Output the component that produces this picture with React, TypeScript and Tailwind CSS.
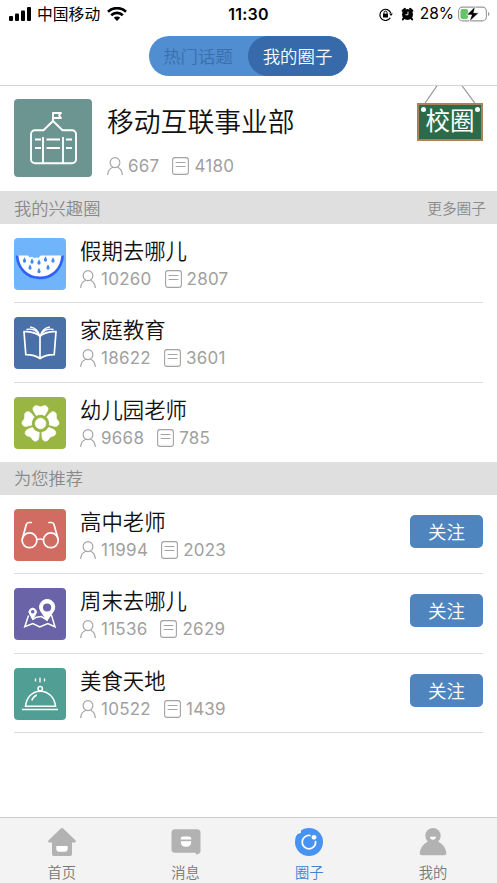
import { useState, type ReactNode } from "react";

type Circle = {
  name: string;
  members: number;
  posts: number;
  color: string;
  icon: ReactNode;
};

function PersonIcon() {
  return (
    <svg width="16" height="18" viewBox="0 0 16 18" fill="none" stroke="#a3a3a3" strokeWidth="1.15">
      <ellipse cx="8" cy="5.6" rx="4.9" ry="5" />
      <path d="M.6 18c.3-4 2.2-6.7 5.4-7.8M10.6 10.2c2.8 1.2 4.5 4 4.8 7.800" />
    </svg>
  );
}

function PostIcon() {
  return (
    <svg width="17" height="18" viewBox="0 0 17 18" fill="none" stroke="#a3a3a3" strokeWidth="1.1">
      <rect x=".6" y=".6" width="15.8" height="16.8" rx="2.5" />
      <path d="M3.6 5.5h9.8M3.6 9.500h9.8" />
    </svg>
  );
}

function Stats({ members, posts }: { members: number; posts: number }) {
  return (
    <div className="flex h-5 items-center font-['Inter','Noto_Sans_CJK_SC',sans-serif] text-[17px] leading-5 tracking-[0.25px] text-[#a0a0a0]">
      <PersonIcon />
      <span className="ml-[5px]">{members}</span>
      <span className="ml-[13px]">
        <PostIcon />
      </span>
      <span className="ml-[5px]">{posts}</span>
    </div>
  );
}

function SchoolIcon() {
  return (
    <svg className="size-full" viewBox="0 0 78 78" fill="none" stroke="#fff" strokeWidth="1.9" strokeLinejoin="round">
      <path d="M39 23v-9h8l-2 2.500 2 2.500h-7M39 22l-9.500 9.200H21a4 4 0 0 0-4 4v25a4 4 0 0 0 4 4h37a4 4 0 0 0 4-4v-25a4 4 0 0 0-4-4h-9.500z" />
      <path d="M29 38v26M49 38v26M21 40.500h6M21 49h6M32.500 40.500H46M32.500 49H46M52 40.500h6M52 49h6" />
    </svg>
  );
}

const watermelon = (
  <svg className="size-full" viewBox="0 0 52 52">
    <path d="M3 17.500h45.500C47.500 32 38 41 26 41S4 32 3 17.500z" fill="#fff" />
    <path d="M3 17.500C4 31.500 14 39.800 26 39.800S47.500 31.500 48.700 17.500" fill="none" stroke="#2f62f5" strokeWidth="2.700" />
    <path d="M2 17h12l1.500 2.500 2.500-.8 2 1.300 3-.6 1.500.500L27 17h23v-2H2z" fill="#70b5fb" />
    <g fill="#4388ed">
      {[
        [10.5, 22.5],
        [18, 23.5],
        [25, 24.5],
        [31.5, 21.5],
        [39, 22.5],
        [16, 29.5],
        [34, 29.5],
        [25, 33],
      ].map(([x, y]) => (
        <path key={`${x}-${y}`} transform={`translate(${x} ${y})`} d="M0-3.200Q1.600-.3 1.600.6a1.600 1.600 0 0 1-3.200 0Q-1.600-.3 0-3.200z" />
      ))}
    </g>
  </svg>
);

const book = (
  <svg className="size-full" viewBox="0 0 52 52" fill="none" stroke="#fff" strokeWidth="1.700" strokeLinejoin="round">
    <path d="M26 19.500c-4-4-8.500-5-16-4.800l1.800 23c6 0 10.200.8 14.200 4 4-3.200 8.200-4 14.200-4l1.800-23c-7.500-.2-12 .8-16 4.800zM26 19.500v22" />
    <path d="M12.500 12.500c6-1.500 10.500.8 13.500 7 3-6.200 7.500-8.500 13.500-7M16 10c4.500.5 8.500 4 10 9.500 1.500-5.500 5.500-9 10-9.500" strokeWidth="1.300" />
  </svg>
);

const flower = (
  <svg className="size-full" viewBox="0 0 52 52" fill="#fff" stroke="#fff" strokeWidth=".8" strokeLinejoin="round">
    {[0, 72, 144, 216, 288].map((angle) => (
      <path
        key={angle}
        transform={`rotate(${angle} 26.500 26.500)`}
        d="M22.300 18.500c-1.300-2.500-3.300-4.500-3.300-6.500 0-2.500 2.500-4 4.800-3 1.200.5 1.800.8 2.700.8s1.500-.3 2.700-.8c2.300-1 4.800.5 4.800 3 0 2-2 4-3.300 6.500-2.500-1.400-5.900-1.400-8.400 0z"
      />
    ))}
    <circle cx="26.500" cy="26.500" r="5.300" />
  </svg>
);

const glasses = (
  <svg className="size-full" viewBox="0 0 52 52" fill="none" stroke="#fff" strokeWidth="1.700" strokeLinecap="round">
    <circle cx="15.500" cy="31.300" r="7.400" />
    <circle cx="36.800" cy="31.300" r="7.400" />
    <path d="M22.900 30.500q3.300-1 6.500 0M8.300 30l4-14.500q.7-2 2.500-2h2.500M44 30l-4-14.500q-.7-2-2.500-2H35" />
  </svg>
);

const mapPins = (
  <svg className="size-full" viewBox="0 0 52 52" fill="none" stroke="#fff">
    <path d="M14.500 27.500l-3.700 11.300 8-3.300 7 3.500 8-3.500 7.200 3.300-3.500-11.500-2.500-.8-2 5.500-5.500-3.500-5 .7-4 2.500" strokeWidth="1.500" />
    <path d="M18.700 31.500l-2.900-5.200a3.700 3.700 0 1 1 5.800 0z" fill="#fff" />
    <circle cx="18.700" cy="23.800" r="1.800" fill="#6a63a8" stroke="none" />
    <path d="M33 32.500l-6.200-9.300a7.600 7.600 0 1 1 12.700 0z" fill="#fff" />
    <circle cx="33.100" cy="19.500" r="4.100" fill="#6a63a8" stroke="none" />
  </svg>
);

const dish = (
  <svg className="size-full" viewBox="0 0 52 52" fill="none" stroke="#fff" strokeWidth="1.500">
    <path d="M11.500 38.200C12.500 29 18.500 23.200 26.300 23.200S40.500 29 41.500 38.200zM8 41.600h36M17.800 32.500c.8-2.600 2.400-4.300 5-5.500" />
    <circle cx="26.200" cy="20.800" r="2.200" />
    <path d="M21.500 10.500v3M26 9.500v5M30.500 10.500v3" strokeWidth="1.300" />
  </svg>
);

const myCircles: Circle[] = [
  { name: "假期去哪儿", members: 10260, posts: 2807, color: "bg-[#70b5fb]", icon: watermelon },
  { name: "家庭教育", members: 18622, posts: 3601, color: "bg-[#4a70a8]", icon: book },
  { name: "幼儿园老师", members: 9668, posts: 785, color: "bg-[#98b641]", icon: flower },
];

const recommended: Circle[] = [
  { name: "高中老师", members: 11994, posts: 2023, color: "bg-[#d06c62]", icon: glasses },
  { name: "周末去哪儿", members: 11536, posts: 2629, color: "bg-[#6a63a8]", icon: mapPins },
  { name: "美食天地", members: 10522, posts: 1439, color: "bg-[#519f94]", icon: dish },
];

function StatusBar() {
  return (
    <div className="grid h-7 grid-cols-3 items-center px-[9px] text-black">
      <div className="flex items-center">
        <svg width="22" height="14" viewBox="0 0 22 14">
          <rect x="0" y="9" width="4" height="5" rx="1" />
          <rect x="6" y="6.500" width="4" height="7.500" rx="1" />
          <rect x="12" y="3.500" width="4" height="10.500" rx="1" />
          <rect x="18" y="0" width="4" height="14" rx="1" />
        </svg>
        <span className="ml-[6px] text-[15.800px] leading-5">中国移动</span>
        <svg className="ml-[7px]" width="20" height="14" viewBox="0 0 20 14" fill="none" stroke="#000" strokeWidth="2.600">
          <path d="M1 4.700a13 13 0 0 1 18 0M4.200 8.200a8.400 8.400 0 0 1 11.600 0" />
          <path d="M10 14l-3.200-3.200a4.600 4.600 0 0 1 6.400 0z" fill="#000" stroke="none" />
        </svg>
      </div>
      <div className="text-center font-['Inter',sans-serif] text-[16px] font-semibold tracking-[0.2px]">11:30</div>
      <div className="flex items-center justify-end">
        <svg width="14" height="13" viewBox="0 0 14 13" fill="none" stroke="#000" strokeWidth="1.200">
          <path d="M11.300 9.800A5.600 5.600 0 1 1 11.800 5" />
          <path d="M10.100 5.400h3.800L12 8z" fill="#000" stroke="none" />
          <rect x="4" y="5.700" width="5" height="3.800" fill="#000" stroke="none" />
          <path d="M5 6V4.600a1.500 1.500 0 0 1 3 0V6" strokeWidth="1" />
        </svg>
        <svg className="ml-[8px]" width="13" height="14" viewBox="0 0 14 14">
          <circle cx="7" cy="7.500" r="5.900" />
          <path d="M1.800 3.500l2.400-2M12.200 3.500L9.800 1.500M3 11.500l-1 1.400M11 11.500l1 1.400" stroke="#000" strokeWidth="2.200" strokeLinecap="round" />
          <path d="M7.500 4.500v3.300H4.800" fill="none" stroke="#fff" />
        </svg>
        <span className="ml-[6px] font-['Inter',sans-serif] text-[15.500px] leading-5">28%</span>
        <svg className="-mr-[2px] ml-1" width="32" height="16" viewBox="0 0 32 16">
          <rect x=".6" y="1.100" width="27.800" height="13.800" rx="4" fill="none" stroke="#999" strokeWidth="1.100" />
          <rect x="2.500" y="3" width="7.500" height="10" rx="2" fill="#65c466" />
          <path d="M30 6v4q1.500-.5 1.500-2T30 6" fill="#999" />
          <path d="M17.500 0L8.500 9h5l-2.300 7L21 6.700h-5.200z" stroke="#fff" strokeWidth=".8" />
        </svg>
      </div>
    </div>
  );
}

function SchoolSign() {
  return (
    <div className="flex w-[66px] flex-col">
      <svg width="66" height="17" viewBox="0 0 66 17" fill="none" stroke="#999" strokeWidth="1.200">
        <path d="M20.500-1L7.500 18M44.500-1L58.500 18" />
      </svg>
      <div className="relative flex h-[38px] items-center justify-center border-2 border-[#a98355] bg-[#2c6b48] pb-[3px] text-[24.500px] leading-none text-white">
        <span className="absolute left-[1.500px] top-[1.500px] size-[5px] rounded-full bg-white" />
        <span className="absolute right-[1.500px] top-[1.500px] size-[5px] rounded-full bg-white" />
        校圈
      </div>
    </div>
  );
}

function SectionBar({ title, action }: { title: string; action?: string }) {
  return (
    <div className="flex h-[33px] items-center justify-between bg-[#dfdfdf] pl-[14px] pr-[11px] font-[350] text-[#8a8a8a]">
      <h2 className="text-[17.300px] leading-6">{title}</h2>
      {action && <button className="text-[14.700px] leading-6">{action}</button>}
    </div>
  );
}

function CircleRow({ circle, divider, canFollow }: { circle: Circle; divider: boolean; canFollow?: boolean }) {
  return (
    <li
      className={`mx-[14px] flex h-[79.330px] items-start border-b pt-[14px] ${divider ? "border-[#dcdcdc]" : "border-transparent"}`}
    >
      <div className={`size-[52px] shrink-0 overflow-hidden rounded-[4px] ${circle.color}`}>{circle.icon}</div>
      <div className="-mt-px ml-[14px] flex-1">
        <h3 className="text-[21.400px] font-[350] leading-[26px] text-[#111]">{circle.name}</h3>
        <div className="mt-[6px]">
          <Stats members={circle.members} posts={circle.posts} />
        </div>
      </div>
      {canFollow && (
        <button className="mt-[6px] h-[33px] w-[73px] rounded-[5px] bg-[#4f85bf] text-[18.500px] font-[350] leading-[33px] text-white">
          关注
        </button>
      )}
    </li>
  );
}

const tabs = [
  {
    label: "首页",
    icon: (
      <svg width="28" height="28" viewBox="0 0 28 28" fill="#b2b2b2">
        <path d="M12.800.6q1.200-1.100 2.400 0L27.600 12.500q.8 1.700-.9 1.900H24v11q0 2.600-2.600 2.600H6.600Q4 28 4 25.400v-11H1.300q-1.700-.2-.9-1.900z" />
        <path d="M8.300 18h11.400v2.800q0 3-3 3h-5.400q-3 0-3-3z" fill="#fff" />
      </svg>
    ),
  },
  {
    label: "消息",
    icon: (
      <svg width="30" height="28" viewBox="0 0 30 28" fill="#b2b2b2">
        <path d="M4 1.300h22a3.500 3.500 0 0 1 3.500 3.500v18.400q0 1-.8 2l-3.500 1.600-.6-2H4A3.500 3.500 0 0 1 .5 21.300V4.800A3.500 3.500 0 0 1 4 1.300z" />
        <path d="M9.700 11.500v-.8q0-2.300 2.300-2.300h6q2.300 0 2.300 2.300v.8zM9.700 13.200h10.600q0 5.500-5.300 5.500t-5.300-5.500z" fill="#fff" />
      </svg>
    ),
  },
  {
    label: "圈子",
    icon: (
      <svg width="28" height="28" viewBox="0 0 28 28" fill="none">
        <circle cx="14" cy="14" r="14" fill="#4693f2" />
        <path d="M0 7V0h7.500L6 2.500v2.300L3 6z" fill="#f3f3f3" />
        <path d="M15 7.500A6.700 6.700 0 1 0 20.600 13.500" stroke="#fff" strokeWidth="1.700" strokeLinecap="round" />
        <circle cx="19" cy="9.300" r="2.400" fill="#fff" />
      </svg>
    ),
  },
  {
    label: "我的",
    icon: (
      <svg width="28" height="28" viewBox="0 0 28 28" fill="#b2b2b2">
        <circle cx="14" cy="7.700" r="7.700" />
        <path d="M9 13.500h10c4.500 2.500 7.500 6 8.300 11.300q.1 2.500-2.300 2.500H3Q.6 27.300.7 24.800C1.500 19.500 4.500 16 9 13.500z" />
        <path d="M10.800 8.800h6.400q-.7 3-3.200 3t-3.200-3z" fill="#fff" />
      </svg>
    ),
  },
];

export default function App() {
  const [activeTab, setActiveTab] = useState("圈子");

  return (
    <div className="flex h-[883px] w-[497px] flex-col overflow-hidden bg-white font-['Noto_Sans_CJK_SC',sans-serif]">
      <StatusBar />

      <header className="flex h-[58px] shrink-0 justify-center border-b border-[#d3d3d3] pt-2">
        <div className="flex h-10 w-[199px] rounded-full bg-[#508ed1] text-[17.400px] leading-10">
          <button className="w-[99px] pr-px font-[350] text-[#3a6eae]">热门话题</button>
          <button className="w-[100px] rounded-full bg-[#366aaa] pr-px font-[350] text-white">我的圈子</button>
        </div>
      </header>

      <main className="flex-1">
        <section className="flex h-[105px] items-start pl-[14px] pr-[14px]">
          <div className="mt-[13px] size-[78px] shrink-0 overflow-hidden rounded-[4px] bg-[#6c9592]">
            <SchoolIcon />
          </div>
          <div className="ml-[15px] mt-[19px] flex-1">
            <h1 className="text-[26.800px] font-[350] leading-8 text-[#111]">移动互联事业部</h1>
            <div className="mt-[19px]">
              <Stats members={667} posts={4180} />
            </div>
          </div>
          <SchoolSign />
        </section>

        <SectionBar title="我的兴趣圈" action="更多圈子" />
        <ul>
          {myCircles.map((circle, index) => (
            <CircleRow key={circle.name} circle={circle} divider={index < myCircles.length - 1} />
          ))}
        </ul>

        <SectionBar title="为您推荐" />
        <ul>
          {recommended.map((circle) => (
            <CircleRow key={circle.name} circle={circle} divider canFollow />
          ))}
        </ul>
      </main>

      <nav className="grid h-[66px] shrink-0 grid-cols-4 border-t border-[#cdcdcd] bg-[#f3f3f3] pr-[2px]">
        {tabs.map((tab) => (
          <button key={tab.label} onClick={() => setActiveTab(tab.label)} className="flex flex-col items-center pt-[10px]">
            {tab.icon}
            <span
              className={`mt-[6px] text-[14.300px] font-[350] leading-5 ${activeTab === tab.label ? "text-[#4084d2]" : "text-[#777]"}`}
            >
              {tab.label}
            </span>
          </button>
        ))}
      </nav>
    </div>
  );
}
